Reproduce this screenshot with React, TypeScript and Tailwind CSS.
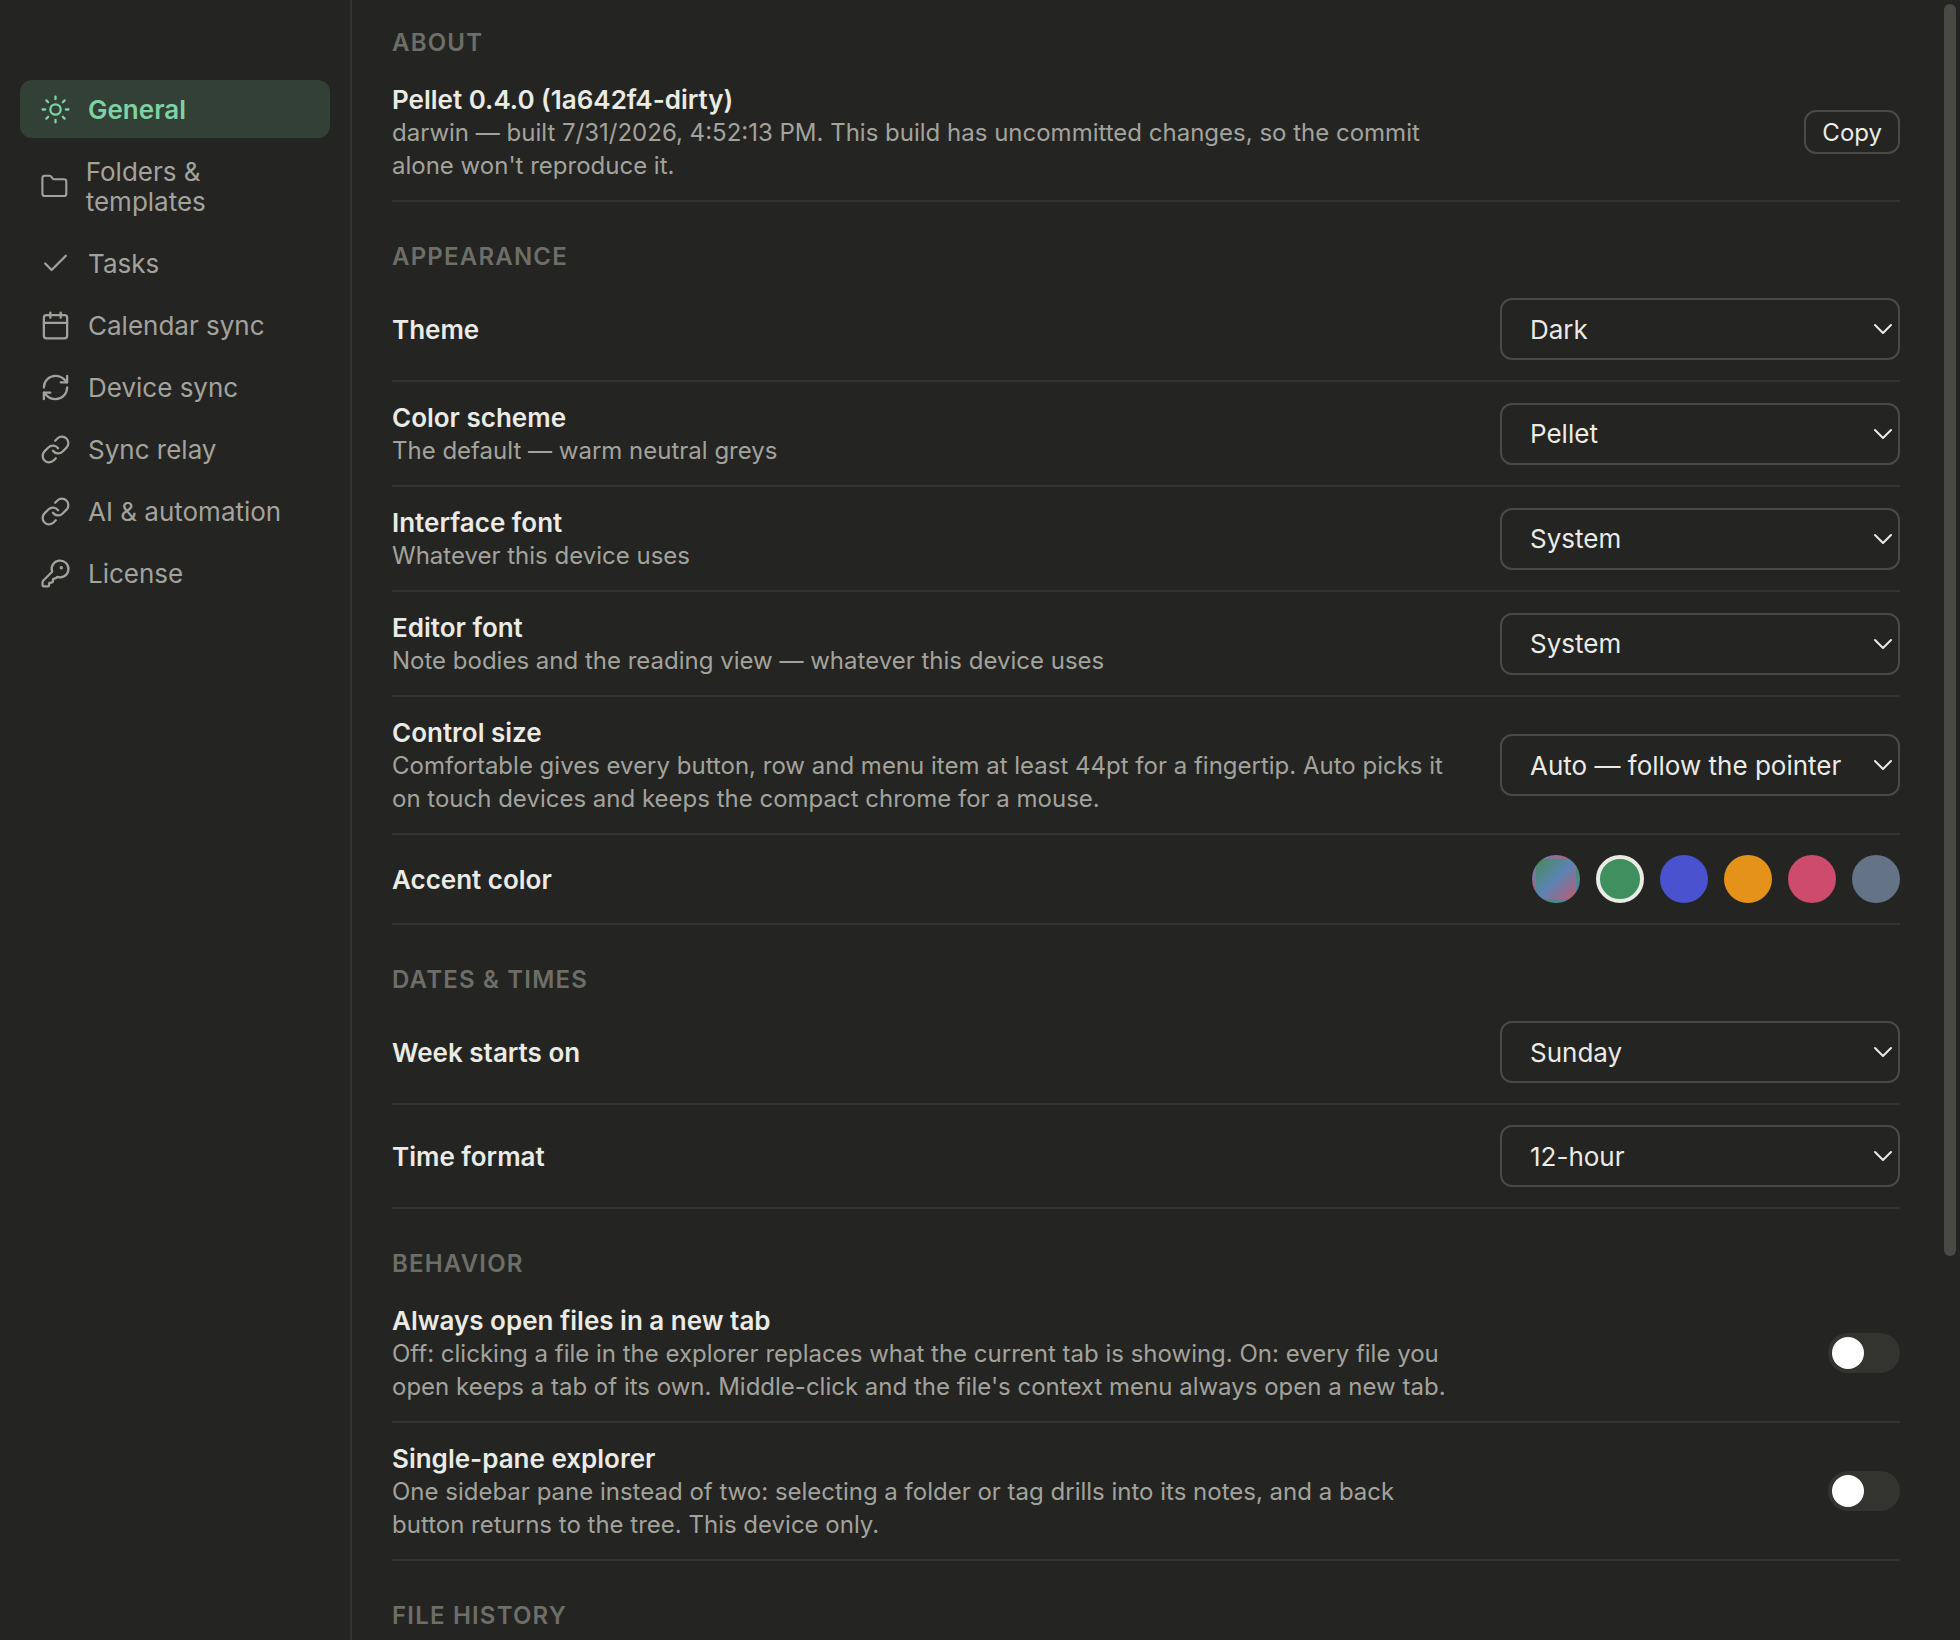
import { useId, useState } from 'react'
import type { ReactNode } from 'react'
import { Sun, Folder, Check, Calendar, RefreshCw, Link, KeyRound, ChevronDown } from 'lucide-react'
import clsx from 'clsx'

const NAV = [
  { label: 'General', icon: Sun },
  { label: 'Folders & templates', icon: Folder },
  { label: 'Tasks', icon: Check },
  { label: 'Calendar sync', icon: Calendar },
  { label: 'Device sync', icon: RefreshCw },
  { label: 'Sync relay', icon: Link },
  { label: 'AI & automation', icon: Link },
  { label: 'License', icon: KeyRound },
]

const ACCENTS = [
  { name: 'Scheme default', bg: 'bg-[linear-gradient(135deg,#488a5a,#5c84b4,#bd5a72)]' },
  { name: 'Green', bg: 'bg-[#3f8f5f]' },
  { name: 'Indigo', bg: 'bg-[#4a52d0]' },
  { name: 'Orange', bg: 'bg-[#e5921a]' },
  { name: 'Rose', bg: 'bg-[#cd4b6c]' },
  { name: 'Slate', bg: 'bg-[#657386]' },
]

function Section({ title, children }: { title: string; children?: ReactNode }) {
  return (
    <section className="mt-10 first:mt-7">
      <h2 className="mb-1.5 text-[24px] leading-[30px] font-semibold tracking-wider uppercase text-[#6e6e68]">{title}</h2>
      {children}
    </section>
  )
}

function Row({ title, desc, htmlFor, children }: { title: string; desc?: string; htmlFor?: string; children: ReactNode }) {
  return (
    <div className="flex items-center justify-between gap-8 border-b-2 border-[#333331] py-5">
      <div className="-mb-0.5 max-w-[1068px]">
        <label htmlFor={htmlFor} className="block text-[26px] leading-8 font-semibold text-[#ebebe6]">{title}</label>
        {desc && <p className="text-[24px] leading-[33px] text-[#a3a39d]">{desc}</p>}
      </div>
      {children}
    </div>
  )
}

function SelectRow({ title, desc, options }: { title: string; desc?: string; options: string[] }) {
  const id = useId()
  return (
    <Row title={title} desc={desc} htmlFor={id}>
      <div className="relative w-[400px] shrink-0">
        <select id={id} className="block h-[62px] w-full appearance-none rounded-xl border-2 border-[#4a4a46] bg-transparent pr-12 pl-7 text-[26px] text-[#ebebe6]">
          {options.map(o => <option key={o}>{o}</option>)}
        </select>
        <ChevronDown size={32} strokeWidth={1.5} className="pointer-events-none absolute top-[15px] right-px text-[#ebebe6]" />
      </div>
    </Row>
  )
}

function ToggleRow({ title, desc }: { title: string; desc: string }) {
  const id = useId()
  const [on, setOn] = useState(false)
  return (
    <Row title={title} desc={desc} htmlFor={id}>
      <input
        id={id}
        type="checkbox"
        role="switch"
        checked={on}
        onChange={e => setOn(e.target.checked)}
        className="h-10 w-[72px] shrink-0 appearance-none rounded-full bg-[#333330] p-1 before:block before:size-8 before:rounded-full before:bg-white checked:bg-[#3f8f5f] checked:before:translate-x-8"
      />
    </Row>
  )
}

export default function App() {
  const [page, setPage] = useState('General')
  const [accent, setAccent] = useState('Green')

  return (
    <div className="flex h-screen overflow-hidden bg-[#242422] font-['Inter','Liberation_Sans',sans-serif]">
      {/* Sidebar */}
      <nav className="flex w-[352px] shrink-0 flex-col gap-1 border-r-2 border-[#333331] px-5 pt-20">
        {NAV.map(({ label, icon: Icon }) => (
          <button
            key={label}
            type="button"
            onClick={() => setPage(label)}
            className={clsx(
              'flex items-center gap-[17px] rounded-xl px-5 py-[13px] text-left text-[26px] leading-[30px]',
              label === page ? 'bg-[#334035] font-semibold text-[#7fd1a6]' : 'text-[#a3a39d]',
            )}
          >
            <Icon size={31} strokeWidth={1.75} />
            <span className="pt-0.5">{label}</span>
          </button>
        ))}
      </nav>

      {/* Settings */}
      <main className="min-w-0 flex-1 overflow-hidden px-10">
        <Section title="About">
          <Row
            title="Pellet 0.4.0 (1a642f4-dirty)"
            desc="darwin — built 7/31/2026, 4:52:13 PM. This build has uncommitted changes, so the commit alone won't reproduce it."
          >
            <button type="button" className="h-11 shrink-0 rounded-xl border-2 border-[#4a4a46] px-4 pt-0.5 text-[24px] leading-7 text-[#ebebe6]">Copy</button>
          </Row>
        </Section>

        <Section title="Appearance">
          <SelectRow title="Theme" options={['Dark', 'Light', 'System']} />
          <SelectRow title="Color scheme" desc="The default — warm neutral greys" options={['Pellet']} />
          <SelectRow title="Interface font" desc="Whatever this device uses" options={['System']} />
          <SelectRow title="Editor font" desc="Note bodies and the reading view — whatever this device uses" options={['System']} />
          <SelectRow
            title="Control size"
            desc="Comfortable gives every button, row and menu item at least 44pt for a fingertip. Auto picks it on touch devices and keeps the compact chrome for a mouse."
            options={['Auto — follow the pointer', 'Compact', 'Comfortable']}
          />
          <Row title="Accent color">
            <div className="flex gap-4">
              {ACCENTS.map(({ name, bg }) => (
                <input
                  key={name}
                  type="radio"
                  name="accent"
                  aria-label={name}
                  checked={accent === name}
                  onChange={() => setAccent(name)}
                  className={clsx('size-12 appearance-none rounded-full border-4 border-transparent checked:border-[#ebebe6]', bg)}
                />
              ))}
            </div>
          </Row>
        </Section>

        <Section title="Dates & times">
          <SelectRow title="Week starts on" options={['Sunday', 'Monday']} />
          <SelectRow title="Time format" options={['12-hour', '24-hour']} />
        </Section>

        <Section title="Behavior">
          <ToggleRow
            title="Always open files in a new tab"
            desc="Off: clicking a file in the explorer replaces what the current tab is showing. On: every file you open keeps a tab of its own. Middle-click and the file's context menu always open a new tab."
          />
          <ToggleRow
            title="Single-pane explorer"
            desc="One sidebar pane instead of two: selecting a folder or tag drills into its notes, and a back button returns to the tree. This device only."
          />
        </Section>

        <Section title="File history" />
      </main>

      {/* Scrollbar */}
      <div className="w-5 shrink-0 p-1">
        <div className="h-[76.7%] w-3 rounded-full bg-[#4a4a45]" />
      </div>
    </div>
  )
}
